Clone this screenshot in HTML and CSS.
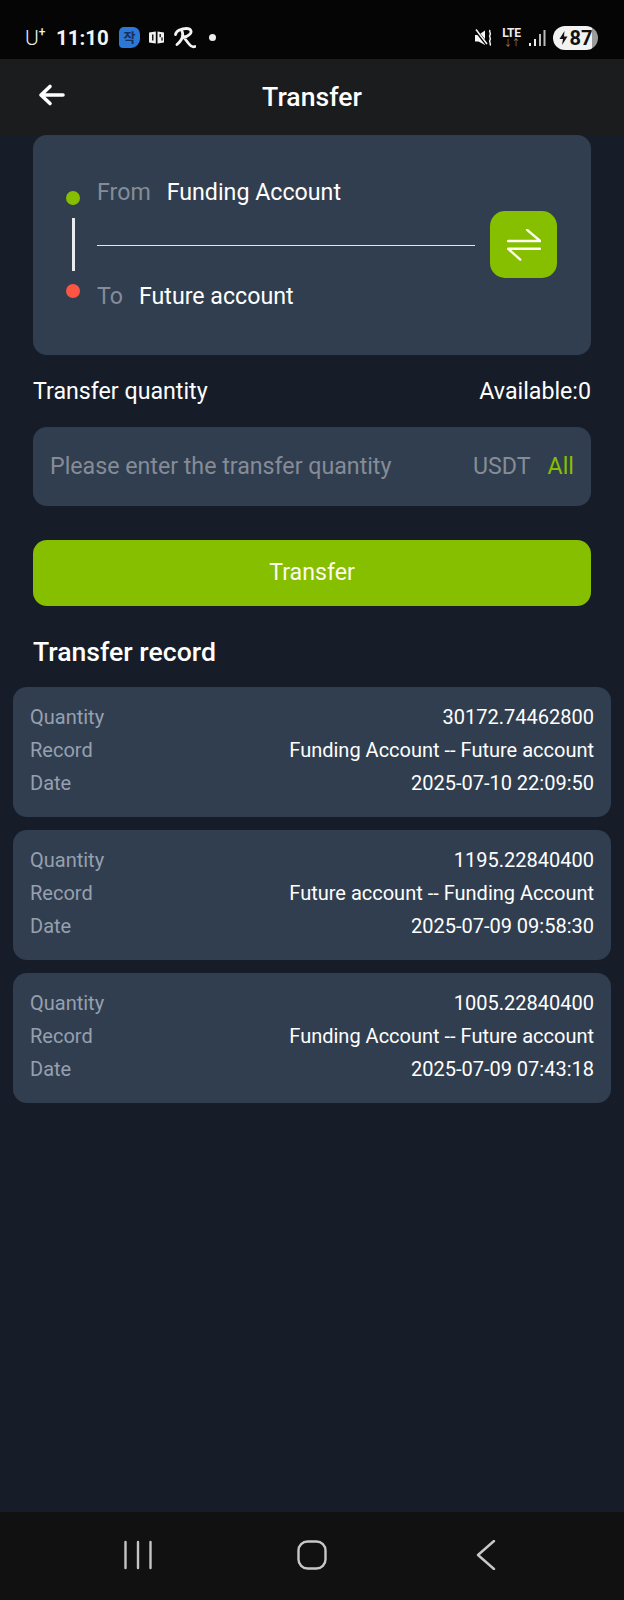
FILE: index.html
```html
<!DOCTYPE html>
<html lang="en">
<head>
<meta charset="utf-8">
<title>Transfer</title>
<link rel="stylesheet" href="styles.css">
</head>
<body>
<div class="phone">
  <div class="status">
    <div class="status-left">
      <span class="carrier">U<sup>+</sup></span>
      <span class="clock">11:10</span>
      <span class="app-blue">작</span>
      <svg class="ic-news" width="16" height="13" viewBox="0 0 16 13"><path d="M0 1.500L6.800 0.500V12.500L0 11.500ZM8.500 0.500L15 1.500V11.500L8.500 12.500Z" fill="#f0f0f0"/><rect x="3" y="3.500" width="1.500" height="6" fill="#1a1a1a"/><rect x="10.500" y="3" width="1.400" height="3.200" fill="#1a1a1a"/><rect x="12.300" y="6.400" width="1.400" height="3.200" fill="#1a1a1a"/></svg>
      <svg class="ic-r" width="22" height="22" viewBox="0 0 22 22"><path d="M1.500 7.500C2 3.500 8 1.500 12.500 1.500C17 1.500 18.500 5 15.500 7.500C13.500 9.500 11 10 9.500 10L15 17C16.500 19 18.500 20.500 21 19.500M8 4C9.500 8 8.500 13 3 17.500" fill="none" stroke="#f4f4f4" stroke-width="2.800" stroke-linecap="round"/></svg>
      <span class="dot"></span>
    </div>
    <div class="status-right">
      <svg class="ic-mute" width="18" height="18" viewBox="0 0 18 18"><path d="M0 6H3.500L10 1.500V16L3.500 12.500H0Z" fill="#f6f6f6"/><path d="M0.500 1L12 15.500" stroke="#050505" stroke-width="3.400"/><path d="M1 0.500L12 15" stroke="#f6f6f6" stroke-width="1.500"/><path d="M15 1C13.500 3 16.500 4 15 6C13.500 8 16.500 9 15 11C13.500 13 16.500 14 15 16.500" fill="none" stroke="#f4f4f4" stroke-width="1.500"/></svg>
      <span class="net"><span class="lte">LTE</span><span class="updown">↓↑</span></span>
      <svg class="ic-signal" width="17" height="18" viewBox="0 0 17 18"><rect x="0" y="14" width="2" height="3" fill="#eee"/><rect x="5" y="10" width="2" height="7" fill="#eee"/><rect x="10" y="5" width="2" height="12" fill="#bbb"/><rect x="14.500" y="1" width="2" height="16" fill="#bbb"/></svg>
      <span class="battery"><svg width="9" height="14" viewBox="0 0 9 14"><path d="M5.500 0L0.500 8H4L3 14L8.500 5.500H5Z" fill="#111"/></svg><span>87</span></span>
    </div>
  </div>
  <header class="topbar">
    <svg class="back" width="28" height="24" viewBox="0 0 28 24"><path d="M26 12H4M13 3.500L4 12L13 20.500" fill="none" stroke="#fff" stroke-width="3.600" stroke-linecap="round" stroke-linejoin="round"/></svg>
    <h1 class="title">Transfer</h1>
  </header>
  <main class="content">
    <section class="route">
      <div class="rail">
        <span class="pin pin-from"></span>
        <span class="rail-line"></span>
        <span class="pin pin-to"></span>
      </div>
      <div class="accounts">
        <div class="acct acct-from"><span class="acct-label">From</span><span class="acct-name">Funding Account</span></div>
        <div class="acct acct-to"><span class="acct-label">To</span><span class="acct-name">Future account</span></div>
      </div>
      <button class="swap" type="button" aria-label="Swap">
        <svg width="34" height="32" viewBox="0 0 34 32"><path d="M1 12H33.300L20 0.800M33 19.700H1L13.300 30.600" fill="none" stroke="#fbfbee" stroke-width="2.400" stroke-linecap="round" stroke-linejoin="round"/></svg>
      </button>
    </section>
    <div class="qty-head"><span>Transfer quantity</span><span>Available:0</span></div>
    <div class="qty-input">
      <span class="placeholder">Please enter the transfer quantity</span>
      <span class="unit">USDT</span>
      <span class="all">All</span>
    </div>
    <button class="submit" type="button">Transfer</button>
    <h2 class="record-title">Transfer record</h2>
    <div class="records">
      <article class="record">
        <div class="row"><span class="k">Quantity</span><span class="v">30172.74462800</span></div>
        <div class="row"><span class="k">Record</span><span class="v">Funding Account -- Future account</span></div>
        <div class="row"><span class="k">Date</span><span class="v">2025-07-10 22:09:50</span></div>
      </article>
      <article class="record">
        <div class="row"><span class="k">Quantity</span><span class="v">1195.22840400</span></div>
        <div class="row"><span class="k">Record</span><span class="v">Future account -- Funding Account</span></div>
        <div class="row"><span class="k">Date</span><span class="v">2025-07-09 09:58:30</span></div>
      </article>
      <article class="record">
        <div class="row"><span class="k">Quantity</span><span class="v">1005.22840400</span></div>
        <div class="row"><span class="k">Record</span><span class="v">Funding Account -- Future account</span></div>
        <div class="row"><span class="k">Date</span><span class="v">2025-07-09 07:43:18</span></div>
      </article>
    </div>
  </main>
  <nav class="navbar">
    <svg width="28" height="30" viewBox="0 0 28 30"><path d="M1.500 2V28M14 2V28M26.500 2V28" stroke="#c4c4c4" stroke-width="2.400" stroke-linecap="round"/></svg>
    <svg width="30" height="30" viewBox="0 0 30 30"><rect x="1.500" y="1.500" width="27" height="27" rx="9" fill="none" stroke="#c8c8c8" stroke-width="2.400"/></svg>
    <svg class="nav-back" width="20" height="30" viewBox="0 0 20 30"><path d="M18 1L2 15L18 29" fill="none" stroke="#c8c8c8" stroke-width="2.400" stroke-linecap="round" stroke-linejoin="round"/></svg>
  </nav>
</div>
</body>
</html>
```

FILE: styles.css
```css
* { box-sizing: border-box; }
html, body { margin: 0; padding: 0; background: #171d28; }
body { font-family: Roboto, "Noto Sans CJK KR", sans-serif; color: #fff; }
.phone { width: 624px; height: 1600px; display: flex; flex-direction: column; overflow: hidden; }

.status { height: 59px; flex: none; background: #050505; display: flex; justify-content: space-between; align-items: center; padding: 16px 26px 0 25px; }
.status-left, .status-right { display: flex; align-items: center; }
.carrier { font-size: 21px; font-weight: 300; color: #f0f0f0; width: 31px; line-height: 24px; }
.carrier sup { font-size: 12px; font-weight: 500; line-height: 0; vertical-align: 9px; }
.clock { font-size: 20.500px; font-weight: 700; color: #f4f4f4; width: 63px; }
.app-blue { width: 21px; height: 21px; background: #2b78d8; border-radius: 5px 7px 9px 4px; color: #16305a; font: 700 13px/20px "Noto Sans CJK KR", sans-serif; text-align: center; margin-right: 9px; }
.ic-news { margin-right: 9px; }
.ic-r { margin-right: 13px; }
.dot { width: 7px; height: 7px; background: #eee; border-radius: 50%; }
.ic-mute { margin-right: 9px; }
.net { display: flex; flex-direction: column; align-items: center; width: 19px; margin-right: 8px; line-height: 10px; }
.lte { font-size: 12px; font-weight: 700; color: #eee; letter-spacing: -0.300px; }
.updown { font-size: 9px; color: #888; letter-spacing: -1px; }
.ic-signal { margin-right: 7px; }
.battery { width: 45px; height: 24px; border-radius: 12px; background: linear-gradient(90deg, #f2f2f2 0 87%, #9a9a9a 87%); color: #111; display: flex; align-items: center; justify-content: center; gap: 2px; font-size: 20px; font-weight: 700; }

.topbar { height: 76px; flex: none; background: #1b1c1e; position: relative; display: flex; align-items: center; justify-content: center; }
.back { position: absolute; left: 37px; top: 24px; }
.title { margin: 0; font-size: 26.600px; font-weight: 500; line-height: 1; }

.content { flex: 1; display: flex; flex-direction: column; padding: 0 13px; }
.route { margin: 0 20px; height: 220px; background: #313e50; border-radius: 14px; display: flex; align-items: flex-start; padding: 56px 0 0 33px; }
.rail { width: 30px; flex: none; display: flex; flex-direction: column; align-items: flex-start; }
.pin { width: 14px; height: 14px; border-radius: 50%; }
.pin-from { background: #86be00; }
.pin-to { background: #fb5544; }
.rail-line { width: 2.500px; height: 53px; background: #e8ecf0; margin: 13px 0 13px 6px; }
.accounts { width: 378px; flex: none; margin-left: 1px; }
.acct { display: flex; align-items: flex-start; font-size: 23.200px; line-height: 26px; }
.acct-from { height: 67px; margin-top: -12px; border-bottom: 1.500px solid #e2e6ea; }
.acct-to { margin-top: 37px; }
.acct-label { color: #858c97; margin-right: 16px; }
.swap { width: 67px; height: 67px; margin: 20px 0 0 15px; border: 0; padding: 0; border-radius: 15px; background: #86be00; display: flex; align-items: center; justify-content: center; }

.qty-head { margin: 23px 20px 0; display: flex; justify-content: space-between; font-size: 23.200px; line-height: 26px; }
.qty-input { margin: 23px 20px 0; height: 79px; border-radius: 14px; background: #313e50; display: flex; align-items: center; padding: 0 17px 1px; font-size: 23.200px; }
.placeholder { color: #858c97; flex: 1; }
.unit { color: #858c97; margin-right: 17px; }
.all { color: #86be00; }
.submit { margin: 34px 20px 0; height: 66px; border: 0; border-radius: 14px; background: #86be00; color: #fbfbee; font: 400 23.200px Roboto, sans-serif; padding: 0 0 2px; }
.record-title { margin: 30px 20px 0; font-size: 26.600px; font-weight: 500; line-height: 32px; }
.records { margin-top: 19px; display: flex; flex-direction: column; gap: 13px; }
.record { height: 130px; background: #313e50; border-radius: 14px; padding: 13px 17px; display: flex; flex-direction: column; }
.row { height: 33px; display: flex; justify-content: space-between; align-items: center; font-size: 20px; }
.k { color: #96a0ae; }
.v { color: #fff; }

.navbar { height: 88px; flex: none; background: #111; display: flex; align-items: center; gap: 145px; padding: 0 0 2px 124px; }
.nav-back { margin-left: 4px; }
```
